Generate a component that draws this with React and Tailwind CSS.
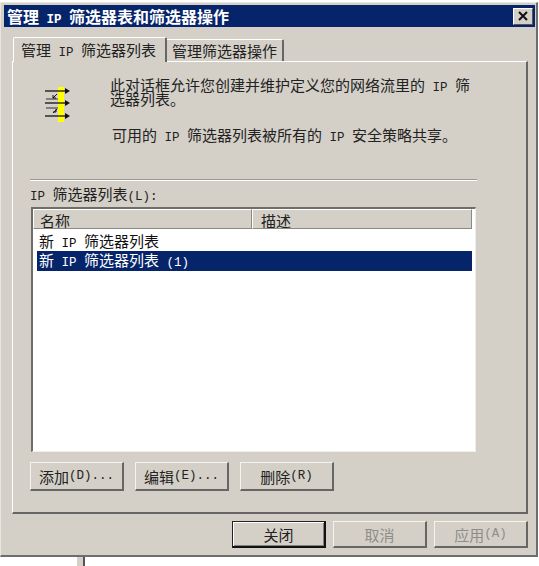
const CJK = '"Noto Sans CJK SC", sans-serif';

function L({ children }) {
  return <span className="font-['Liberation_Mono'] text-[12.5px] leading-[0] whitespace-pre">{children}</span>;
}

function Btn({ children, w, h = 29, dis, def }) {
  return (
    <div
      style={{ width: w, height: h }}
      className={
        "flex items-center justify-center text-[15px] leading-none bg-[#d4d0c8] border-t border-l border-r-2 border-b-2 " +
        (def
          ? "border-t-[#222] border-l-[#222] border-r-[#111] border-b-[#111] shadow-[inset_1px_1px_0_#fff,inset_-1px_-1px_0_#808080]"
          : "border-t-[#f4f3ef] border-l-[#f4f3ef] border-r-[#666] border-b-[#666]") +
        (dis ? " text-[#8f8d88]" : " text-[#222]")
      }
    >
      {children}
    </div>
  );
}

function FilterIcon() {
  return (
    <svg width="26" height="36" viewBox="0 0 26 36" className="block">
      <rect x="13" y="0" width="6" height="35" fill="#ffff00" />
      <g stroke="#111" strokeWidth="1.3" fill="#111">
        <path d="M0 4H21" fill="none" />
        <path d="M20 1l5 3-5 3z" stroke="none" />
        <path d="M0 16H21" fill="none" />
        <path d="M20 13l5 3-5 3z" stroke="none" />
        <path d="M0 29H21" fill="none" />
        <path d="M20 26l5 3-5 3z" stroke="none" />
        <path d="M1 12H13M1 21H13" fill="none" stroke="#333" strokeWidth="1" />
        <path d="M12 7L8 11M12 22L8 26" fill="none" strokeWidth="1" />
        <path d="M8 8v3h3M11 22v3H8" fill="none" strokeWidth="1" />
      </g>
    </svg>
  );
}

export default function App() {
  return (
    <div style={{ fontFamily: CJK }} className="w-[539px] h-[566px] bg-white overflow-hidden flex flex-col leading-none">
      <div className="w-[538px] h-[555px] mt-[2px] bg-[#d4d0c8] border-t border-l border-t-[#e8e6e0] border-l-[#e8e6e0] border-r-2 border-b-2 border-r-[#6e6d69] border-b-[#6e6d69] pl-[3px] pr-[1px] pt-[2px] flex flex-col shrink-0">
        <div className="h-[22px] bg-[#06246a] text-white font-bold text-[16px] flex items-center justify-between pl-[3px] pr-[2px] shrink-0">
          <span>管理<L> IP </L>筛选器表和筛选器操作</span>
          <div className="w-[20px] h-[17px] bg-[#d4d0c8] border-t border-l border-t-white border-l-white border-r border-b border-r-[#555] border-b-[#555] flex items-center justify-center">
            <svg width="10" height="10" viewBox="0 0 10 10"><path d="M1 1L9 9M9 1L1 9" stroke="#111" strokeWidth="2" /></svg>
          </div>
        </div>

        <div className="flex pl-[9px] mt-[9px] h-[25px] items-end shrink-0 relative z-10">
          <div className="w-[154px] h-[25px] bg-[#d4d0c8] border-t border-l border-t-white border-l-white border-r-2 border-r-[#666] rounded-t-[2px] text-[15px] text-[#222] flex items-center pl-[7px] -mb-[1px] pb-[1px]">
            <span>管理<L> IP </L>筛选器列表</span>
          </div>
          <div className="w-[117px] h-[22px] bg-[#d4d0c8] border-t border-t-white border-r-2 border-r-[#666] text-[15px] text-[#222] flex items-center pl-[5px] pb-[1px] rounded-tr-[2px]">
            管理筛选器操作
          </div>
        </div>

        <div className="w-[516px] ml-[8px] h-[453px] border-t border-l border-t-white border-l-white border-r-2 border-b-2 border-r-[#666] border-b-[#666] shrink-0 flex flex-col">
          <div className="flex h-[110px] shrink-0 pt-[16px]">
            <div className="w-[97px] pl-[32px] pt-[9px] shrink-0"><FilterIcon /></div>
            <div className="text-[15px] text-[#222] leading-[14px] flex-1">
              <div>此对话框允许您创建并维护定义您的网络流里的<L> IP </L>筛</div>
              <div>选器列表。</div>
              <div className="mt-[22px] ml-[2px]">可用的<L> IP </L>筛选器列表被所有的<L> IP </L>安全策略共享。</div>
            </div>
          </div>
          <div className="ml-[17px] w-[447px] h-[2px] border-t border-t-[#9a9893] border-b border-b-white mt-[7px] shrink-0" />
          <div className="ml-[17px] mt-[5px] text-[15px] text-[#222] h-[16px] leading-[16px] shrink-0">
            <L>IP </L>筛选器列表<L>(L):</L>
          </div>
          <div className="ml-[18px] mt-[5px] w-[445px] h-[245px] bg-white border-t-2 border-l-2 border-t-[#6e6d69] border-l-[#6e6d69] border-r border-b border-r-[#efeee9] border-b-[#efeee9] shrink-0 flex flex-col">
            <div className="h-[20px] flex text-[15px] text-[#222] shrink-0">
              <div className="w-[219px] bg-[#d4d0c8] border-t border-l border-t-white border-l-white border-r border-b border-r-[#8a8984] border-b-[#8a8984] pl-[6px] leading-[22px] overflow-hidden">名称</div>
              <div className="w-[220px] bg-[#d4d0c8] border-t border-l border-t-white border-l-white border-r border-b border-r-[#8a8984] border-b-[#8a8984] pl-[8px] leading-[22px] overflow-hidden">描述</div>
            </div>
            <div className="h-[22px] pl-[6px] pt-[2px] text-[15px] text-[#111] leading-[20px] shrink-0">新<L> IP </L>筛选器列表</div>
            <div className="h-[20px] w-[435px] ml-[4px] bg-[#06246a] pl-[2px] text-[15px] text-white leading-[18px] shrink-0">新<L> IP </L>筛选器列表<L> (1)</L></div>
          </div>
          <div className="flex ml-[17px] mt-[10px] gap-[11px] shrink-0">
            <Btn w={94}>添加<L>(D)...</L></Btn>
            <Btn w={94}>编辑<L>(E)...</L></Btn>
            <Btn w={94}>删除<L>(R)</L></Btn>
          </div>
        </div>

        <div className="flex justify-end gap-[7px] pr-[7px] mt-[7px] shrink-0">
          <Btn w={94} h={27} def>关闭</Btn>
          <Btn w={94} h={27} dis>取消</Btn>
          <Btn w={94} h={27} dis>应用<L>(A)</L></Btn>
        </div>
      </div>
      <div className="ml-[77px] w-[8px] flex-1 bg-[#d4d0c8] border-r-2 border-r-[#555]" />
    </div>
  );
}
